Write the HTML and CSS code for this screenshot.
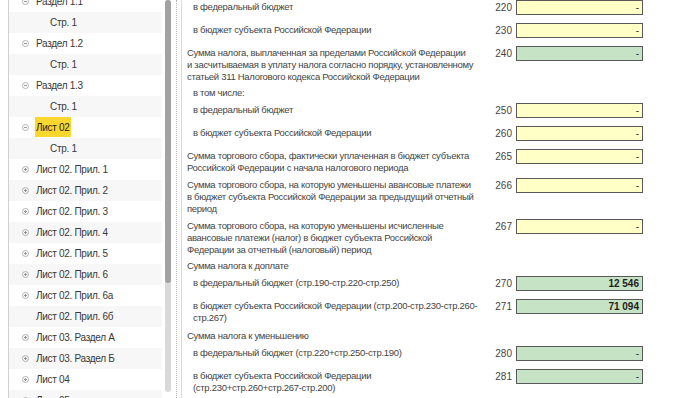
FILE: index.html
```html
<!DOCTYPE html>
<html lang="ru">
<head>
    <meta charset="UTF-8">
    <title>Декларация по налогу на прибыль</title>
    <link rel="stylesheet" href="styles.css">
</head>
<body>
    <svg class="defs" width="0" height="0">
        <symbol id="minus" viewBox="0 0 7 7">
            <circle cx="3.5" cy="3.5" r="3" fill="none" stroke="#a9a9a9" stroke-width="0.9"/>
            <line x1="2" y1="3.5" x2="5" y2="3.5" stroke="#8c8c8c" stroke-width="0.9"/>
        </symbol>
        <symbol id="plus" viewBox="0 0 7 7">
            <circle cx="3.5" cy="3.5" r="3" fill="none" stroke="#a9a9a9" stroke-width="0.9"/>
            <line x1="2" y1="3.5" x2="5" y2="3.5" stroke="#8c8c8c" stroke-width="0.9"/>
            <line x1="3.5" y1="2" x2="3.5" y2="5" stroke="#8c8c8c" stroke-width="0.9"/>
        </symbol>
    </svg>

    <div class="screen">
        <aside class="nav">
            <ul class="tree">
                <li class="node"><svg class="toggle"><use href="#minus"/></svg>Раздел 1.1</li>
                <li class="leaf">Стр. 1</li>
                <li class="node"><svg class="toggle"><use href="#minus"/></svg>Раздел 1.2</li>
                <li class="leaf">Стр. 1</li>
                <li class="node"><svg class="toggle"><use href="#minus"/></svg>Раздел 1.3</li>
                <li class="leaf">Стр. 1</li>
                <li class="node"><svg class="toggle"><use href="#minus"/></svg><span class="current">Лист 02</span></li>
                <li class="leaf">Стр. 1</li>
                <li class="node"><svg class="toggle"><use href="#plus"/></svg>Лист 02. Прил. 1</li>
                <li class="node"><svg class="toggle"><use href="#plus"/></svg>Лист 02. Прил. 2</li>
                <li class="node"><svg class="toggle"><use href="#plus"/></svg>Лист 02. Прил. 3</li>
                <li class="node"><svg class="toggle"><use href="#plus"/></svg>Лист 02. Прил. 4</li>
                <li class="node"><svg class="toggle"><use href="#plus"/></svg>Лист 02. Прил. 5</li>
                <li class="node"><svg class="toggle"><use href="#plus"/></svg>Лист 02. Прил. 6</li>
                <li class="node"><svg class="toggle"><use href="#plus"/></svg>Лист 02. Прил. 6а</li>
                <li class="node bare">Лист 02. Прил. 6б</li>
                <li class="node"><svg class="toggle"><use href="#plus"/></svg>Лист 03. Раздел А</li>
                <li class="node"><svg class="toggle"><use href="#plus"/></svg>Лист 03. Раздел Б</li>
                <li class="node"><svg class="toggle"><use href="#plus"/></svg>Лист 04</li>
                <li class="node"><svg class="toggle"><use href="#plus"/></svg>Лист 05</li>
            </ul>
            <div class="scrollbar"><div class="thumb"></div></div>
        </aside>

        <div class="splitter"></div>

        <main class="sheet">
            <div class="row sub">
                <div class="label">в федеральный бюджет</div>
                <div class="code">220</div>
                <div class="field input">-</div>
            </div>
            <div class="row sub">
                <div class="label">в бюджет субъекта Российской Федерации</div>
                <div class="code">230</div>
                <div class="field input">-</div>
            </div>
            <div class="row tall">
                <div class="label">Сумма налога, выплаченная за пределами Российской Федерации<br>и засчитываемая в уплату налога согласно порядку, установленному<br>статьей 311 Налогового кодекса Российской Федерации</div>
                <div class="code">240</div>
                <div class="field calc">-</div>
            </div>
            <div class="caption sub">в том числе:</div>
            <div class="row sub">
                <div class="label">в федеральный бюджет</div>
                <div class="code">250</div>
                <div class="field input">-</div>
            </div>
            <div class="row sub">
                <div class="label">в бюджет субъекта Российской Федерации</div>
                <div class="code">260</div>
                <div class="field input">-</div>
            </div>
            <div class="row tall">
                <div class="label">Сумма торгового сбора, фактически уплаченная в бюджет субъекта<br>Российской Федерации с начала налогового периода</div>
                <div class="code">265</div>
                <div class="field input">-</div>
            </div>
            <div class="row tall">
                <div class="label">Сумма торгового сбора, на которую уменьшены авансовые платежи<br>в бюджет субъекта Российской Федерации за предыдущий отчетный<br>период</div>
                <div class="code">266</div>
                <div class="field input">-</div>
            </div>
            <div class="row tall">
                <div class="label">Сумма торгового сбора, на которую уменьшены исчисленные<br>авансовые платежи (налог) в бюджет субъекта Российской<br>Федерации за отчетный (налоговый) период</div>
                <div class="code">267</div>
                <div class="field input">-</div>
            </div>
            <div class="caption">Сумма налога к доплате</div>
            <div class="row sub">
                <div class="label">в федеральный бюджет (стр.190-стр.220-стр.250)</div>
                <div class="code">270</div>
                <div class="field calc total">12 546</div>
            </div>
            <div class="row sub tall">
                <div class="label">в бюджет субъекта Российской Федерации (стр.200-стр.230-стр.260-<br>стр.267)</div>
                <div class="code">271</div>
                <div class="field calc total">71 094</div>
            </div>
            <div class="caption spaced">Сумма налога к уменьшению</div>
            <div class="row sub">
                <div class="label">в федеральный бюджет (стр.220+стр.250-стр.190)</div>
                <div class="code">280</div>
                <div class="field calc">-</div>
            </div>
            <div class="row sub tall">
                <div class="label">в бюджет субъекта Российской Федерации<br>(стр.230+стр.260+стр.267-стр.200)</div>
                <div class="code">281</div>
                <div class="field calc">-</div>
            </div>
        </main>
    </div>
</body>
</html>
```

FILE: styles.css
```css
body {
    margin: 0;
    background-color: #fff;
    font-family: 'Liberation Sans', Arial, sans-serif;
    font-size: 9.5px;
    color: #3c3c3c;
    overflow: hidden;
}
.defs {
    position: absolute;
}
.screen {
    display: flex;
    height: 398px;
    overflow: hidden;
}

/* дерево разделов */
.nav {
    display: flex;
    width: 163px;
    margin-left: 8px;
    border-left: 1px solid #cfcfcf;
    flex-shrink: 0;
}
.tree {
    list-style: none;
    margin: -9.5px 0 0 0;
    padding: 0;
    width: 153px;
}
.tree li {
    display: flex;
    align-items: center;
    height: 21px;
    padding-left: 13px;
    white-space: nowrap;
    font-size: 10px;
    color: #383838;
    letter-spacing: -0.3px;
}
.tree li:nth-child(even) {
    background-color: #f7f7f7;
}
.tree .leaf {
    padding-left: 41px;
}
.tree .bare {
    padding-left: 27px;
}
.toggle {
    width: 7px;
    height: 7px;
    margin-right: 7px;
    flex-shrink: 0;
}
.current {
    display: flex;
    align-items: center;
    height: 20px;
    padding: 0 1px;
    margin-left: -1px;
    background-color: #f9d72f;
    color: #222;
}
.scrollbar {
    width: 6px;
    height: 392px;
    margin-left: 3px;
    background-color: #d9d9d9;
    border-radius: 3px;
}
.thumb {
    height: 283px;
    background-color: #a2a2a2;
    border-radius: 3px;
}
.splitter {
    width: 4px;
    margin-left: 4px;
    border-left: 1px dotted #b5b5b5;
    border-right: 1px solid #dadada;
    flex-shrink: 0;
}

/* форма листа */
.sheet {
    width: 456px;
    padding-left: 5px;
}
.row {
    display: flex;
    align-items: flex-start;
    margin-bottom: 8px;
}
.row.tall {
    margin-bottom: 4px;
}
.label {
    flex: 1;
    min-width: 0;
    padding-top: 1px;
    line-height: 12px;
    white-space: nowrap;
    color: #444;
    letter-spacing: -0.3px;
}
.sub .label, .caption.sub {
    padding-left: 6px;
}
.caption {
    line-height: 12px;
    margin-bottom: 4px;
    color: #444;
    letter-spacing: -0.3px;
}
.caption.spaced {
    margin-top: 6px;
}
.code {
    width: 22px;
    line-height: 15px;
    text-align: right;
    font-size: 10px;
    color: #444;
}
.field {
    width: 127px;
    height: 15px;
    margin-left: 4px;
    box-sizing: border-box;
    border: 1px solid #595959;
    padding-right: 3px;
    text-align: right;
    line-height: 13px;
    font-size: 10px;
    color: #333;
}
.input {
    background-color: #ffffc6;
}
.calc {
    background-color: #c6e3c6;
}
.total {
    font-weight: bold;
    color: #1e1e1e;
}
```
